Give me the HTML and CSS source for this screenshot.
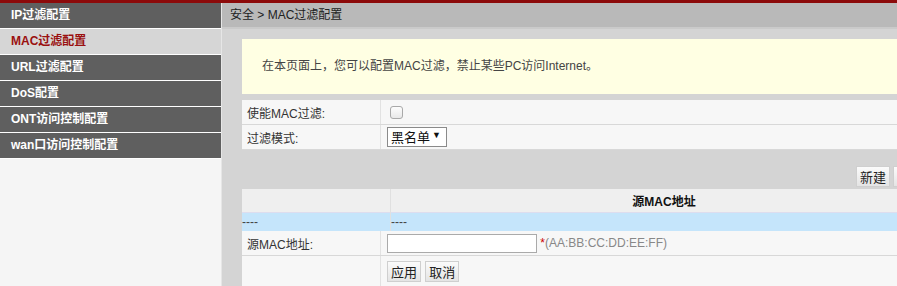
FILE: index.html
```html
<!DOCTYPE html>
<html lang="zh-CN">
<head>
    <meta charset="UTF-8">
    <title>MAC过滤配置</title>
    <link rel="stylesheet" href="styles.css">
</head>
<body>
    <div class="topbar"></div>
    <div class="page">
        <div class="menu">
            <a href="#" class="menu-item">IP过滤配置</a>
            <a href="#" class="menu-item active">MAC过滤配置</a>
            <a href="#" class="menu-item">URL过滤配置</a>
            <a href="#" class="menu-item">DoS配置</a>
            <a href="#" class="menu-item">ONT访问控制配置</a>
            <a href="#" class="menu-item">wan口访问控制配置</a>
        </div>

        <div class="content">
            <div class="crumb">安全 &gt; MAC过滤配置</div>
            <div class="panel">
                <div class="notice">在本页面上，您可以配置MAC过滤，禁止某些PC访问Internet。</div>

                <table class="cfg">
                    <tr>
                        <td class="label">使能MAC过滤:</td>
                        <td><input type="checkbox" class="check"></td>
                    </tr>
                    <tr>
                        <td class="label">过滤模式:</td>
                        <td>
                            <span class="select-box">
                                <select class="select">
                                    <option>黑名单</option>
                                    <option>白名单</option>
                                </select>
                            </span>
                        </td>
                    </tr>
                </table>

                <div class="toolbar">
                    <button class="btn">新建</button>
                    <button class="btn btn-del" title="删除"></button>
                </div>

                <table class="list">
                    <tr class="head">
                        <td class="first"></td>
                        <td class="title">源MAC地址</td>
                    </tr>
                    <tr class="row">
                        <td class="first">----</td>
                        <td>----</td>
                    </tr>
                </table>

                <table class="cfg form">
                    <tr>
                        <td class="label">源MAC地址:</td>
                        <td>
                            <input type="text" class="mac">
                            <span class="hint"><span class="star">*</span>(AA:BB:CC:DD:EE:FF)</span>
                        </td>
                    </tr>
                    <tr class="actions">
                        <td class="label"></td>
                        <td>
                            <button class="btn">应用</button>
                            <button class="btn">取消</button>
                        </td>
                    </tr>
                </table>
            </div>
        </div>
    </div>
</body>
</html>
```

FILE: styles.css
```css
html, body {
    overflow: hidden;
}

body {
    margin: 0;
    font-family: "Liberation Sans", "Noto Sans CJK SC", sans-serif;
    font-size: 12px;
    color: #333;
    background: #d4d4d4;
}

.topbar {
    height: 3px;
    background: #8c0a0a;
}

.page {
    display: flex;
    width: 937px;
    height: 283px;
}

/* left menu */
.menu {
    width: 221px;
    flex-shrink: 0;
    background: #f5f5f5;
    border-right: 1px solid #e6e6e6;
}

.menu-item {
    display: block;
    height: 25px;
    line-height: 25px;
    padding-left: 11px;
    border-bottom: 1px solid #fff;
    background: #5f5f5f;
    color: #fff;
    font-weight: bold;
    text-decoration: none;
}

.menu-item.active {
    background: #d6d6d6;
    color: #9a1010;
}

/* right side */
.content {
    flex: 1;
    background: #d4d4d4;
}

.crumb {
    height: 24px;
    line-height: 24px;
    padding-left: 8px;
    background: #b9b9b9;
    border-bottom: 2px solid #cacaca;
    color: #222;
}

.panel {
    padding: 10px 0 0 20px;
}

.notice {
    height: 55px;
    line-height: 55px;
    padding-left: 20px;
    background: #ffffe3;
    color: #444;
}

table {
    width: 100%;
    border-collapse: collapse;
}

td {
    padding: 0;
}

.cfg {
    margin-top: 6px;
}

.cfg td {
    height: 24px;
    background: #f7f7f7;
    border-bottom: 1px solid #d8d8d8;
}

.cfg .label {
    width: 133px;
    padding-left: 5px;
    border-right: 1px solid #e2e2e2;
    color: #333;
}

.cfg td + td {
    padding-left: 6px;
}

.check {
    appearance: none;
    -webkit-appearance: none;
    margin: 0 0 0 3px;
    width: 13px;
    height: 13px;
    border: 1px solid #a9a9a9;
    border-radius: 3px;
    background: linear-gradient(#fdfdfd, #e8e8e8);
    vertical-align: middle;
}

.select-box {
    position: relative;
    display: inline-block;
}

.select-box::after {
    content: "▼";
    position: absolute;
    right: 6px;
    top: 3px;
    font-size: 9px;
    color: #111;
    pointer-events: none;
}

.select {
    appearance: none;
    -webkit-appearance: none;
    width: 60px;
    height: 20px;
    padding: 0 0 0 3px;
    border: 1px solid #8a8a8a;
    border-radius: 0;
    background: #fff;
    font-family: inherit;
    font-size: 13px;
    color: #111;
    vertical-align: middle;
}

.toolbar {
    display: flex;
    justify-content: flex-end;
    gap: 3px;
    margin-top: 16px;
    padding-right: 11px;
}

.btn {
    height: 21px;
    padding: 0 3px;
    border: 1px solid #cfcfcf;
    background: linear-gradient(#fbfbfb, #e4e4e4);
    font-family: inherit;
    font-size: 13px;
    color: #222;
    cursor: pointer;
}

.btn-del {
    width: 33px;
}

.list {
    margin-top: 2px;
}

.list td {
    padding-left: 0;
}

.list .first {
    width: 148px;
    border-right: 1px solid #e0e0e0;
}

.head td {
    height: 23px;
    background: #efefef;
}

.head .title {
    text-align: center;
    font-weight: bold;
    color: #111;
}

.row td {
    height: 18px;
    background: #c5e5fb;
    border-top: 1px solid #dde;
    color: #444;
}

.form {
    margin-top: 0;
}

.form td {
    height: 24px;
}

.mac {
    width: 144px;
    height: 15px;
    padding: 1px 2px;
    border: 1px solid #aaa;
    vertical-align: middle;
}

.hint {
    color: #888;
    font-size: 12px;
}

.star {
    color: #c00;
}

.actions td {
    height: 31px;
    border-bottom: none;
}

.actions .btn {
    margin-right: 1px;
}
```
